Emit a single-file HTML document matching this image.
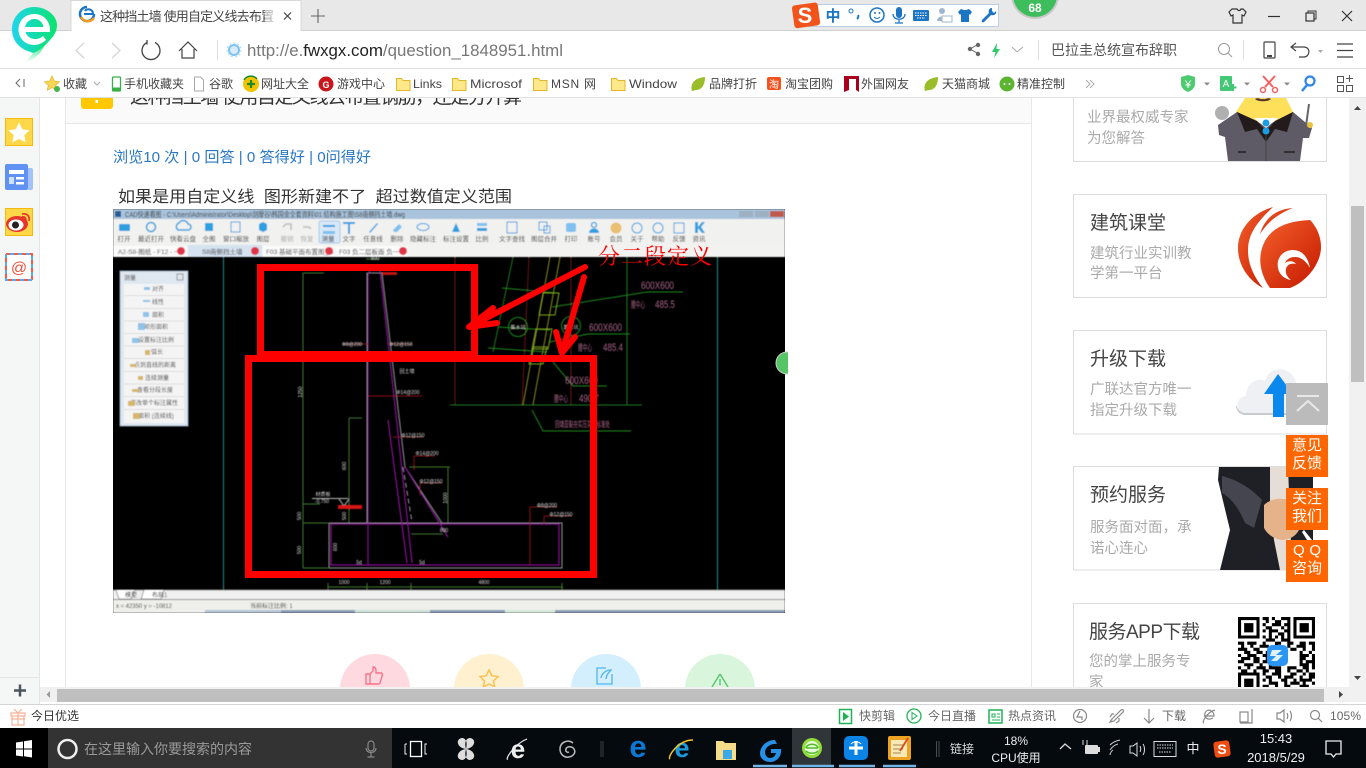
<!DOCTYPE html>
<html lang="zh"><head><meta charset="utf-8"><title>这种挡土墙 使用自定义线去布置</title>
<style>
html,body{margin:0;padding:0;width:1366px;height:768px;overflow:hidden;background:#fff}
svg{display:block;position:absolute;left:0;top:0}
text{font-family:"Liberation Sans","Noto Sans CJK SC",sans-serif;white-space:pre}
.b text{font-size:12px;fill:#444}
.g{font-size:14.5px;fill:#aaa}
.h{font-size:19px;fill:#444}
.o{font-size:15px;fill:#fff;text-anchor:middle}
.l{font-size:6.5px;fill:#333;text-anchor:middle}
.p{font-size:6px;fill:#444;text-anchor:middle}
.w{font-size:5px;fill:#ddd;text-anchor:middle}
.k{font-size:11px;fill:#a9648a}
.s text{font-size:12px;fill:#666}
.t{fill:#eee;font-size:13px;text-anchor:middle}
.ic{fill:none;stroke:#555;stroke-width:1.2}
</style></head><body>
<svg width="1366" height="768" viewBox="0 0 1366 768" xmlns="http://www.w3.org/2000/svg">
<defs>
<linearGradient id="lg" x1="0" x2="1" y1="0" y2="0"><stop offset="0" stop-color="#20d5ea"/><stop offset="1" stop-color="#0be36f"/></linearGradient>
<linearGradient id="tl" x1="0" x2="0" y1="0" y2="1"><stop offset="0" stop-color="#0be36f"/><stop offset="1" stop-color="#0be36f" stop-opacity="0"/></linearGradient>
<linearGradient id="fl" x1="0" x2="1" y1="0" y2="1"><stop offset="0" stop-color="#f4602a"/><stop offset="1" stop-color="#c41800"/></linearGradient>
<filter id="bl" x="0" y="0" width="1" height="1"><feGaussianBlur stdDeviation=".45"/></filter>
<clipPath id="cad"><rect x="113" y="209" width="672" height="404"/></clipPath>
<clipPath id="qr"><rect x="1230" y="610" width="90" height="77"/></clipPath>
</defs>

<!-- page -->
<rect width="1366" height="768" fill="#fff"/>
<rect x="0" y="98" width="39" height="590" fill="#f5f7f6"/>
<rect x="39" y="98" width="1" height="590" fill="#e6e6e6"/>
<rect x="65" y="98" width="1" height="590" fill="#e8e8e8"/>
<rect x="66" y="98" width="965" height="25" fill="#fafafa"/>
<rect x="66" y="123" width="965" height="1" fill="#e6e6e6"/>
<rect x="1031" y="98" width="1" height="590" fill="#e8e8e8"/>
<rect x="81" y="90" width="32" height="19" rx="3" fill="#ffc800"/>
<rect x="95.500" y="100" width="2.500" height="3" fill="#fff"/>
<text x="130" y="103" font-size="19" fill="#333" textLength="392">这种挡土墙 使用自定义线去布置钢筋，还是分开算</text>
<text x="113" y="162" font-size="15" fill="#2a78c4" textLength="258" lengthAdjust="spacingAndGlyphs">浏览10 次 | 0 回答 | 0 答得好 | 0问得好</text>
<text x="118" y="202" font-size="16" fill="#333" textLength="394" lengthAdjust="spacingAndGlyphs">如果是用自定义线  图形新建不了  超过数值定义范围</text>

<!-- left sidebar icons -->
<rect x="5.500" y="118.500" width="27" height="27" fill="#ffd84a" stroke="#f6b910"/>
<path d="M19 122.500l3.300 6.700 7.200 1-5.200 5 1.300 7.200-6.600-3.500-6.600 3.500 1.300-7.200-5.200-5 7.200-1z" fill="#fff"/>
<rect x="5" y="164" width="23" height="26" rx="2" fill="#5f92f3"/><path d="M28 168h3a2 2 0 0 1 2 2v18a2 2 0 0 1-2 2h-3z" fill="#a4c2f8"/>
<rect x="9" y="170" width="15" height="4" fill="#fff"/><rect x="9" y="177" width="5" height="7" fill="#cfe0fc"/><rect x="16" y="177" width="8" height="2.500" fill="#fff"/><rect x="16" y="182" width="8" height="2.500" fill="#fff"/>
<rect x="5.500" y="208.500" width="27" height="27" fill="#ffd84a" stroke="#f6b910"/>
<ellipse cx="17" cy="224" rx="11" ry="8" fill="#e8352c"/><ellipse cx="16" cy="225" rx="7.500" ry="5.500" fill="#fff"/><circle cx="15.500" cy="225" r="3.500" fill="#222"/>
<path d="M22 214c5-1 8 2 7 7M22 217c3-.5 4 1 4 3.500" fill="none" stroke="#e8352c" stroke-width="1.700"/>
<rect x="6" y="254" width="26" height="26" fill="#fff" stroke="#f45b45" stroke-width="2" stroke-dasharray="4 4"/>
<rect x="6" y="254" width="26" height="26" fill="none" stroke="#5aa9ee" stroke-width="2" stroke-dasharray="4 4" stroke-dashoffset="4"/>
<text x="19" y="273" font-size="16" fill="#f0503c" text-anchor="middle">@</text>
<rect x="0" y="677" width="39" height="1" fill="#e4e4e4"/>

<!-- CAD image -->
<g clip-path="url(#cad)">
<rect x="113" y="209" width="672" height="404" fill="#000"/>
<g filter="url(#bl)">
<rect x="113" y="209" width="672" height="10" fill="#a9c3dc"/>
<rect x="115" y="211" width="6" height="6" fill="#2b5d94"/>
<text x="125" y="217" font-size="7.500" fill="#333" textLength="280" lengthAdjust="spacingAndGlyphs">CAD快速看图 - C:\Users\Administrator\Desktop\剑摩谷\韩国金全套资料\01 结构施工图\S8南侧挡土墙.dwg</text>
<rect x="739" y="211" width="14" height="6" fill="#9fb0c2"/><rect x="755" y="211" width="14" height="6" fill="#9fb0c2"/><rect x="770" y="211" width="14" height="6" fill="#c0584c"/>
<rect x="113" y="219" width="672" height="26" fill="#f1f1ef"/>
<rect x="319" y="221" width="21" height="22" rx="2" fill="#d8e8f8" stroke="#a8c8ea"/>
<g fill="#2f9fe0">
<rect x="119" y="224" width="11" height="7" rx="1"/><circle cx="151" cy="227" r="4.500" fill="none" stroke="#2f9fe0" stroke-width="1.500"/>
<path d="M178 230a4 4 0 0 1 1-7 5 5 0 0 1 9 1 3 3 0 0 1 0 6z" fill="none" stroke="#2f9fe0" stroke-width="1.500"/>
<rect x="205" y="223" width="8" height="8"/><rect x="231" y="222" width="9" height="10" fill="none" stroke="#2f9fe0"/><path d="M259 224l4-2 4 2v6l-4 2-4-2z"/>
<path d="M283 227l3-3h5v6M303 227h6l2 2" fill="none" stroke="#bbb" stroke-width="1.500"/>
<rect x="323" y="225" width="12" height="2"/><rect x="323" y="231" width="12" height="3" fill="#7ec0ee"/>
<path d="M343 222h12v2h-5v10h-2v-10h-5z"/><path d="M369 232l8-9 1 1-8 9z"/><path d="M393 230l6-6 3 3-5 5h-3z" fill="#7ec0ee"/><ellipse cx="423" cy="227" rx="6" ry="3.500" fill="none" stroke="#2f9fe0"/>
<path d="M452 232l4-9 4 9z"/><rect x="477" y="223" width="10" height="3" fill="#7ec0ee"/><rect x="477" y="228" width="10" height="3"/>
<rect x="507" y="222" width="10" height="11" fill="none" stroke="#2f9fe0"/><rect x="539" y="222" width="8" height="8" fill="none" stroke="#2f9fe0"/><rect x="544" y="226" width="6" height="7" fill="none" stroke="#2f9fe0"/>
<rect x="566" y="223" width="10" height="9" rx="2" fill="#7ec0ee"/><circle cx="594" cy="225" r="2.500" fill="none" stroke="#2f9fe0" stroke-width="1.300"/><path d="M589 233c0-6 10-6 10 0z"/>
<circle cx="616" cy="228" r="5.500" fill="#e8c070"/><circle cx="637" cy="228" r="5" fill="none" stroke="#2f9fe0"/><circle cx="658" cy="228" r="5" fill="none" stroke="#2f9fe0"/>
<rect x="674" y="223" width="10" height="10" fill="none" stroke="#2f9fe0"/><path d="M695 222h3v5l4-5h3l-4 5 4 6h-3l-4-5v5h-3z"/>
</g>
<g class="l">
<text x="124" y="241">打开</text><text x="151" y="241">最近打开</text><text x="183" y="241">快看云盘</text><text x="209" y="241">全图</text><text x="236" y="241">窗口缩放</text><text x="263" y="241">图层</text><text x="287" y="241" style="fill:#aaa">撤销</text><text x="307" y="241" style="fill:#aaa">恢复</text><text x="328" y="241">测量</text><text x="349" y="241">文字</text><text x="373" y="241">任意线</text><text x="397" y="241">删除</text><text x="423" y="241">隐藏标注</text><text x="456" y="241">标注设置</text><text x="482" y="241">比例</text><text x="512" y="241">文字查找</text><text x="544" y="241">图层合并</text><text x="571" y="241">打印</text><text x="594" y="241">账号</text><text x="616" y="241">会员</text><text x="637" y="241">关于</text><text x="658" y="241">帮助</text><text x="679" y="241">反馈</text><text x="699" y="241">资讯</text>
</g>
<rect x="113" y="245" width="672" height="12" fill="#f2f2f0"/>
<rect x="113" y="246" width="74" height="11" fill="#fbfbfb"/><rect x="188" y="245" width="74" height="12" fill="#d5e2f0"/><rect x="263" y="246" width="72" height="11" fill="#fbfbfb"/><rect x="336" y="246" width="72" height="11" fill="#fbfbfb"/>
<g fill="#333">
<text x="118" y="254" font-size="6.500">A2-S8-图纸 - F12 - 一</text><text x="202" y="254" font-size="6.500">S8南侧挡土墙</text><text x="266" y="254" font-size="6.500">F03 基础平面布置图_t3</text><text x="339" y="254" font-size="6.500">F03 负二层板面 负一</text>
</g>
<circle cx="181" cy="251" r="4" fill="#e03548"/><circle cx="255" cy="251" r="4" fill="#e03548"/><circle cx="329" cy="251" r="4" fill="#e03548"/><circle cx="403" cy="251" r="4" fill="#e03548"/>

<rect x="223" y="257" width="1" height="333" fill="#1f8f8f"/><rect x="717" y="257" width="1" height="333" fill="#1f8f8f"/>

<!-- measure panel -->
<rect x="120" y="271" width="68" height="155" fill="#dfe7f0" stroke="#8ea2b8"/>
<rect x="124" y="284" width="60" height="139" fill="#f4f4f4"/>
<text x="124" y="280" font-size="6" fill="#555">测量</text><rect x="177" y="274" width="6" height="6" fill="none" stroke="#777" stroke-width=".7"/>
<path d="M124 295.500h60M124 308.500h60M124 321h60M124 333.500h60M124 346h60M124 358.500h60M124 371.500h60M124 384h60M124 396.500h60M124 409.500h60" stroke="#ddd"/>
<g class="p">
<text x="158" y="291">对齐</text><text x="158" y="304">线性</text><text x="158" y="317">面积</text><text x="156" y="329">矩形面积</text><text x="156" y="342">设置标注比例</text><text x="157" y="354">弧长</text><text x="155" y="367">点到直线的距离</text><text x="157" y="380">连续测量</text><text x="155" y="392">查看分段长度</text><text x="154" y="405">修改单个标注属性</text><text x="156" y="418">面积 (连续线)</text>
</g>
<g fill="#8fc3e8"><rect x="144" y="287" width="6" height="3"/><rect x="143" y="300" width="7" height="2"/><rect x="143" y="312" width="6" height="5"/><rect x="138" y="323" width="7" height="7"/><rect x="132" y="338" width="7" height="5"/></g>
<g fill="#d8b668"><rect x="145" y="350" width="5" height="5"/><rect x="130" y="364" width="6" height="3"/><rect x="138" y="376" width="5" height="4"/><rect x="132" y="389" width="7" height="3"/><rect x="128" y="401" width="7" height="5"/><rect x="133" y="413" width="7" height="6"/></g>

<!-- right side drawing -->
<g fill="none" stroke-width="1">
<path d="M455 257v148M529 257l-7 148M571 257v148M627 257v148" stroke="#6a1218"/>
<path d="M513 257l-20 95M627 257v148M450 405h192" stroke="#1f7a1f"/>
<path d="M550 257l-27 148M560 257l-27 148" stroke="#8a8a1c"/>
<path d="M502 288l55 5M498 327l52 3M488 348l59 4M552 307l95-15h36M550 342l38-8h42M553 362l20 24h34M532 410l11 21h88" stroke="#1f8a1f"/>
<path d="M543 293l16 0 -4 22-16 0zM536 329l16 0-4 20-16 0zM533 347l14 0-4 17-14 0z" stroke="#7fa81f"/>
<circle cx="518" cy="327" r="9.500" stroke="#1f8a1f"/><circle cx="571" cy="326" r="9.500" stroke="#1f8a1f"/>
</g>
<text x="518" y="329" class="w">集水坑</text><text x="571" y="329" class="w">集水坑</text>
<g class="k">
<text x="641" y="289" textLength="33" lengthAdjust="spacingAndGlyphs">600X600</text>
<text x="631" y="308" font-size="9" style="font-size:9px" textLength="14" lengthAdjust="spacingAndGlyphs">腰中心</text><text x="655" y="308" textLength="20" lengthAdjust="spacingAndGlyphs">485.5</text>
<text x="589" y="331" textLength="33" lengthAdjust="spacingAndGlyphs">600X600</text>
<text x="578" y="351" style="font-size:9px" textLength="14" lengthAdjust="spacingAndGlyphs">腰中心</text><text x="603" y="351" textLength="20" lengthAdjust="spacingAndGlyphs">485.4</text>
<text x="565" y="384" textLength="33" lengthAdjust="spacingAndGlyphs">600X600</text>
<text x="554" y="402" style="font-size:9px" textLength="14" lengthAdjust="spacingAndGlyphs">腰中心</text><text x="579" y="402" textLength="20" lengthAdjust="spacingAndGlyphs">490.7</text>
</g>
<text x="555" y="427" font-size="8" fill="#b56c90" textLength="55" lengthAdjust="spacingAndGlyphs">回填亚黏夯实压实度标准处</text>

<!-- wall drawing -->
<g fill="none">
<path d="M303 273v295M303 273h21M349 418v105M349 418h13M303 504h17M303 523h25M303 568h25M328 587h235M328 583v8M367 583v8M411 583v8M562 583v8M409 467h41M448 467v56M411 534h32M366 259h14" stroke="#3f7a2f"/>
<path d="M367 273v250M367 273h15L405 467l37 56M329 523h233v45H329z" stroke="#999"/>
<path d="M403 467l9 55" stroke="#999" stroke-dasharray="5 3"/>
<path d="M368 275v290M368 275l2-5h10l16 145 16 148M388 420l19 143M405 467l43 70M331 524h228v41H331z" stroke="#8a0f98" stroke-width="1.200"/>
<path d="M343 344h25M387 344h25M368 396h54M393 437h30M414 456h21M414 456v14M420 483h22M420 483v12M530 507h27M530 507v58M544 516h28M544 516v8" stroke="#8e1012"/>
<path d="M312 498.500h36M339 499l5 7 5-7" stroke="#bbb"/>
</g>
<rect x="338" y="505" width="24" height="4" fill="#d81818"/>
<rect x="382" y="272" width="15" height="3" fill="#c01818"/>
<g class="w">
<text x="352" y="346">Φ8@200</text><text x="401" y="346">Φ12@150</text><text x="408" y="394">Φ14@200</text><text x="413" y="437">Φ12@150</text><text x="427" y="455">Φ14@200</text><text x="431" y="483">Φ12@150</text><text x="407" y="373">回土墙</text><text x="323" y="496">材质板</text><text x="322" y="503">-0.750</text><text x="344" y="584">1000</text><text x="385" y="584">1200</text><text x="484" y="584">4800</text><text x="444" y="532">800</text><text x="547" y="507">Φ8@200</text><text x="561" y="516">Φ12@150</text><text x="359" y="564">5d</text><text x="422" y="564">5d</text><text x="375" y="260">800</text>
</g>
<g class="w">
<text transform="translate(302,392) rotate(-90)">1250</text><text transform="translate(346,466) rotate(-90)">600</text><text transform="translate(301,516) rotate(-90)">500</text><text transform="translate(346,516) rotate(-90)">500</text><text transform="translate(301,550) rotate(-90)">500</text><text transform="translate(337,547) rotate(-90)">600</text><text transform="translate(447,498) rotate(-90)">1000</text>
</g>
<!-- bottom -->
<rect x="113" y="590" width="672" height="10" fill="#f0f0f0"/><path d="M113 590h672M113 599.500h672" stroke="#888"/>
<path d="M116 590l3 9h12l4-9M144 590l-3 9h20l3-9" fill="#fff" stroke="#555" stroke-width=".6"/>
<text x="125" y="597" font-size="6" fill="#222">模型</text><text x="152" y="597" font-size="6" fill="#222">布局1</text>
<rect x="113" y="600" width="672" height="10" fill="#efefeb"/>
<text x="116" y="608" font-size="6" fill="#333" textLength="56">x = 42350 y = -10812</text><text x="250" y="608" font-size="6" fill="#333">当前标注比例: 1</text>
<rect x="113" y="610" width="672" height="3" fill="#8a9db8"/>
<rect x="113" y="610" width="94" height="3" fill="#eee"/><rect x="205" y="610" width="76" height="3" fill="#b6c4d6"/><rect x="355" y="610" width="75" height="3" fill="#cfe0d8"/><rect x="505" y="610" width="50" height="3" fill="#d4e8d8"/>
</g>
<!-- red annotation -->
<rect x="260.500" y="267.500" width="214" height="87" fill="none" stroke="#f00" stroke-width="7"/>
<rect x="248.500" y="358.500" width="345" height="216" fill="none" stroke="#f00" stroke-width="7"/>
<path d="M585 267L469 327M497 323L469 327L493 308M584 277L562 353M556 332L562 353L575 337" fill="none" stroke="#f00" stroke-width="6" stroke-linecap="round" stroke-linejoin="round"/>
<text x="598" y="264" font-size="22" fill="#f00" textLength="114" style="font-family:'Liberation Serif','Noto Serif CJK SC',serif">分二段定义</text>
</g>
<circle cx="787" cy="363" r="11" fill="#55c565" stroke="#ccc"/>
<rect x="785" y="345" width="3" height="1" fill="#fff"/>
<rect x="788" y="350" width="12" height="26" fill="#fff"/>

<!-- action circles -->
<circle cx="375" cy="689" r="35" fill="#ffd9e0"/><circle cx="489" cy="689" r="35" fill="#fff0cf"/><circle cx="606" cy="689" r="35" fill="#d3effe"/><circle cx="720" cy="689" r="35" fill="#d9f6dc"/>
<path d="M366 674h4v10h-4zM370 674l3-3v-4c3 0 3 2 3 6h5c1 0 2 1 1 3l-2 7c0 1-1 1-2 1h-8" fill="none" stroke="#f8738c" stroke-width="1.400"/>
<path d="M489 670l2.900 5.700 6.100.9-4.400 4.300 1 6-5.600-2.900-5.600 2.900 1-6-4.400-4.300 6.100-.9z" fill="none" stroke="#fbbf4c" stroke-width="1.400"/>
<path d="M612 674v10h-15v-16h9M601 678c1-5 5-8 10-8-3 3-5 6-5 9" fill="none" stroke="#4eb5ef" stroke-width="1.300"/>
<path d="M720 674l-8 13M720 674l8 13M720 679v6" fill="none" stroke="#55c76a" stroke-width="1.400"/>

<!-- right cards -->
<g fill="#fff" stroke="#ddd">
<rect x="1073.500" y="90" width="253" height="71.500"/><rect x="1073.500" y="194.500" width="253" height="103"/><rect x="1073.500" y="330.500" width="253" height="103.500"/><rect x="1073.500" y="466.500" width="253" height="103.500"/><rect x="1073.500" y="603.500" width="253" height="110"/>
</g>
<text class="g" x="1087" y="122">业界最权威专家</text><text class="g" x="1087" y="143">为您解答</text>
<circle cx="1222" cy="113" r="7" fill="#b0b0b0"/>
<path d="M1245 98h41l7 14-27 14-30-14z" fill="#ffe05a"/>
<path d="M1255 99c4-2 5 1 8 0 3 1 4-2 8 0-3 3-13 3-16 0z" fill="#5a3328"/>
<path d="M1218 125l19-13 29 14 27-14 19 16-3 10-6 0-3 23h-72l-3-24-6-2z" fill="#5f5b66"/>
<path d="M1237 112l20 9 9 10 9-10 18-9-6 20-12-3-9 13-9-13-12 3z" fill="#231b1b"/>
<path d="M1254 118h24l-12 10z" fill="#fff"/><circle cx="1266" cy="123" r="3.500" fill="#1c9de3"/><circle cx="1266" cy="131" r="3.500" fill="#1c9de3"/>
<path d="M1238 152h8M1284 152h11" stroke="#222" stroke-width="1.500"/><path d="M1266 135v26" stroke="#444"/>
<path d="M1309 104l-3 22" stroke="#666" stroke-width="2"/><circle cx="1310" cy="125" r="3" fill="#e8c43c"/>
<text class="h" x="1090" y="229">建筑课堂</text><text class="g" x="1090" y="258">建筑行业实训教</text><text class="g" x="1090" y="278">学第一平台</text>
<path d="M1273 207c-23 7-35 24-35 41 0 17 10 32 25 40-9-11-15-24-15-37 0-15 6-26 25-44z" fill="url(#fl)"/>
<path d="M1293 208c-16 1-28 9-33 26 7-11 17-20 33-26z" fill="url(#fl)"/>
<path d="M1310 220c-23 1-38 8-45 21-7 13-7 30 5 47h20c16-6 31-24 31-41 0-11-5-21-11-27z" fill="url(#fl)"/>
<path d="M1278 268c-2-10 5-18 15-18 9 0 15 7 17 18-4-7-9-11-15-11-5 0-8 2-10 6 4-3 9-2 11 1-4-1-9 0-10 5-1 4 1 8 5 11-7-1-12-6-13-12z" fill="#fff"/>
<text class="h" x="1090" y="365">升级下载</text><text class="g" x="1090" y="394">广联达官方唯一</text><text class="g" x="1090" y="415">指定升级下载</text>
<path d="M1246 413c-12 0-11-16 0-17 0-12 10-19 19-15 3-12 16-14 22-10 10 5 11 17 9 23 5 2 8 6 8 19z" fill="#eef0f4"/>
<path d="M1236 405c0 7 5 10 10 10h48v-2h-48c-5 0-8-3-10-8z" fill="#c8cbd1"/>
<path d="M1278 374l-14 20h9v23h11v-23h9z" fill="#0a88ee"/>
<text class="h" x="1090" y="501">预约服务</text><text class="g" x="1090" y="532">服务面对面，承</text><text class="g" x="1090" y="553">诺心连心</text>
<path d="M1219 467h94v103h-93l10-40-12-50z" fill="#1f2026"/>
<path d="M1270 467h18l4 103h-12l-6-30-4-40z" fill="#e6ded6"/>
<path d="M1222 476c16 4 30 13 40 24l-8 28-9-5c-6-15-14-25-23-30z" fill="#44454e"/>
<path d="M1264 505c8-8 22-8 30-2 8 5 10 14 6 24-2 8-10 13-18 13-8-1-14-5-18-12z" fill="#e6b28a"/>
<path d="M1304 530l8 10h-5l-5-8zM1313 467h14v103h-14z" fill="#fff"/>
<text class="h" x="1089" y="638" textLength="111">服务APP下载</text><text class="g" x="1089" y="666">您的掌上服务专</text><text class="g" x="1089" y="687">家</text>
<!-- QR -->
<g clip-path="url(#qr)"><g transform="translate(1238,617) scale(3.080)">
<path fill="#000" fill-rule="evenodd" d="M0 0h7v7H0zM1 1v5h5V1zM2 2h3v3H2zM18 0h7v7h-7zM19 1v5h5V1zM20 2h3v3h-3zM0 18h7v7H0zM1 19v5h5v-5zM2 20h3v3H2z"/>
<path stroke="#000" fill="none" d="M8 .5h2m1 0h1m2 0h3M9 1.500h1m2 0h2m2 0h1M8 2.500h1m2 0h3m1 0h2M9 3.500h2m3 0h1m1 0h1M8 4.500h1m1 0h3m2 0h2M10 5.500h1m2 0h2m1 0h1M8 6.500h1m1 0h1m1 0h1m1 0h1m1 0h1M9 7.500h3m2 0h3M0 8.500h2m1 0h3m2 0h1m3 0h2m2 0h2m2 0h2m1 0h2M1 9.500h1m2 0h1m2 0h3m2 0h1m3 0h1m2 0h3m2 0h1M0 10.500h3m2 0h2m3 0h3m4 0h2m2 0h1m2 0h1M2 11.500h2m2 0h2m1 0h2m9 0h1m2 0h1M0 12.500h1m2 0h3m2 0h2m10 0h3m1 0h1M1 13.500h3m1 0h2m2 0h1m10 0h2m2 0h1M0 14.500h2m3 0h2m1 0h3m9 0h1m1 0h3M2 15.500h3m2 0h1m2 0h1m9 0h3m1 0h1M0 16.500h1m2 0h1m2 0h3m1 0h4m2 0h3m2 0h2m1 0h1M1 17.500h2m2 0h1m2 0h2m2 0h2m2 0h1m2 0h2m1 0h1M8 18.500h1m2 0h3m3 0h2m2 0h1m1 0h2M9 19.500h2m2 0h1m1 0h3m2 0h1m2 0h2M8 20.500h1m1 0h1m3 0h2m2 0h1m1 0h4M10 21.500h3m2 0h1m1 0h3m1 0h1m2 0h1M8 22.500h2m2 0h1m2 0h2m3 0h3M9 23.500h1m2 0h3m2 0h1m2 0h1m1 0h2M8 24.500h3m2 0h1m2 0h3m2 0h3"/>
</g>
<rect x="1267" y="645" width="21" height="21" rx="5" fill="#2a95f4"/><path d="M1272 650h10l-6 5h7l-6 6h-6l5-5h-6z" fill="#dff0ff"/></g>

<!-- scrollbars -->
<rect x="1349" y="98" width="17" height="590" fill="#f1f1f1"/>
<rect x="1351" y="206" width="13" height="176" fill="#bfbfbf"/>
<path d="M1354 110l3.500-4 3.500 4z" fill="#444"/><path d="M1354 676l3.500 4 3.500-4z" fill="#444"/>
<rect x="0" y="687" width="1366" height="17" fill="#fff"/>
<rect x="0" y="687" width="39" height="17" fill="#f5f7f6"/><rect x="39" y="687" width="1" height="17" fill="#e6e6e6"/>
<rect x="40" y="687" width="1326" height="15" fill="#f0f0f0"/>
<rect x="57" y="689" width="1267" height="13" fill="#bfbfbf"/>
<path d="M50 691l-3.500 3.500 3.500 3.500z" fill="#999"/><path d="M1339 691l4 3.500-4 3.500z" fill="#444"/>
<rect x="1349" y="687" width="17" height="15" fill="#f1f1f1"/>
<rect x="0" y="704" width="1366" height="1" fill="#d4d4d4"/>
<path d="M14 690.500h12M20 684.500v12" stroke="#4d555c" stroke-width="2.500"/>

<!-- float buttons -->
<rect x="1286" y="383" width="42" height="42" fill="#bbb"/><path d="M1297 396h22M1297 411l11-10 11 10" fill="none" stroke="#e8e8e8" stroke-width="2"/>
<rect x="1286" y="435" width="42" height="42" fill="#f60"/><rect x="1286" y="488" width="42" height="42" fill="#f60"/><rect x="1286" y="540" width="42" height="42" fill="#f60"/>
<g class="o"><text x="1307" y="450">意见</text><text x="1307" y="468">反馈</text><text x="1307" y="503">关注</text><text x="1307" y="521">我们</text><text x="1307" y="555" textLength="28">Q Q</text><text x="1307" y="573">咨询</text></g>

<!-- status bar -->
<rect x="0" y="705" width="1366" height="23" fill="#fff"/>
<path d="M11 713h14v3H11zM12 716h12v9H12zM18 713v12M11 719h14M14 709l4 4 4-4" fill="none" stroke="#f5b49a" stroke-width="1.200"/>
<g class="s">
<text x="31" y="720" style="fill:#333">今日优选</text>
<text x="859" y="720">快剪辑</text><text x="928" y="720">今日直播</text><text x="1008" y="720">热点资讯</text><text x="1162" y="720">下载</text><text x="1330" y="720" textLength="31">105%</text>
</g>
<rect x="839.500" y="709.500" width="12" height="14" fill="none" stroke="#1fb255" stroke-width="1.500"/><path d="M843 712l6 4.500-6 4.500z" fill="#1fb255"/>
<circle cx="914" cy="716" r="7" fill="none" stroke="#1fb255" stroke-width="1.300"/><path d="M912 712.500l5 3.500-5 3.500z" fill="none" stroke="#1fb255"/>
<rect x="989" y="710" width="13" height="13" fill="none" stroke="#1fb255" stroke-width="1.500"/><path d="M992 714h3v3h-3zM997 714h3M997 717h3M992 720h8" fill="none" stroke="#1fb255"/>
<g class="ic" style="stroke:#888">
<circle cx="1080" cy="716" r="6.500"/><path d="M1080 711l-3 6h5v3"/>
<path d="M1110 722l4-1 9-9c1-2 0-3-2-2l-9 9zM1114 714l-2 0-2 3M1119 718v3l-3 2"/>
<path d="M1149 709v14M1144 718l5 5 5-5"/>
<path d="M1204 716h10c0-6-7-8-9-3-1 4 2 8 8 5M1204 723c-3 0 3-11 11-13"/>
<rect x="1240" y="712" width="8" height="10"/><path d="M1240 723h12v-14"/>
<path d="M1277 713h3l4-3v12l-4-3h-3zM1287 713c1 2 1 4 0 6M1290 711c2 3 2 7 0 10"/>
<circle cx="1315" cy="715" r="4.500"/><path d="M1318 718l4 4"/>
</g>

<!-- taskbar -->
<rect x="0" y="728" width="1366" height="40" fill="#040a0e"/>
<rect x="0" y="728" width="48" height="40" fill="#000"/>
<rect x="48" y="728" width="344" height="40" fill="#333"/>
<path d="M16 742.500l7-1v7h-7zM24 741.300l8-1.300v8.500h-8zM16 749.500h7v7l-7-1zM24 749.500h8v8l-8-1.200z" fill="#fff"/>
<circle cx="67.500" cy="749" r="9" fill="none" stroke="#eee" stroke-width="2.500"/>
<text x="84" y="754" font-size="14" fill="#9a9a9a">在这里输入你要搜索的内容</text>
<rect x="368" y="741" width="6" height="10" rx="3" fill="none" stroke="#888" stroke-width="1.200"/><path d="M366 748c0 6 10 6 10 0M371 753v4M367.500 757h7" fill="none" stroke="#888" stroke-width="1.200"/>
<path d="M405 744h2M405 744v10h2M427 744h-2v10h2" fill="none" stroke="#eee"/><rect x="410.500" y="741.500" width="11" height="15" fill="none" stroke="#fff" stroke-width="1.300"/>
<path d="M466 749c-9-1-11-10-4-11 3 0 6 3 4 11zM466 749c9-1 11-10 4-11-3 0-6 3-4 11zM466 749c-9 1-11 10-4 11 3 0 6-3 4-11zM466 749c9 1 11 10 4 11-3 0-6-3-4-11z" fill="#ddd"/>
<text x="518" y="758" font-size="26" font-weight="bold" fill="#eee" text-anchor="middle">e</text><path d="M508 759c-4 2 6-15 19-20" fill="none" stroke="#eee" stroke-width="1.200"/>
<path d="M573 743c-5-4-13-1-13 6 0 6 5 9 9 8 5-1 7-5 5-8-2-3-7-3-8 0-1 2 1 4 3 3" fill="none" stroke="#bbb" stroke-width="1.500"/>
<path d="M601 741v16M603 741v16" stroke="#3a3e42"/>
<text x="638" y="757" font-size="31" font-weight="bold" fill="#0b78d6" text-anchor="middle">e</text>
<text x="682" y="757" font-size="27" font-weight="bold" fill="#1a9be0" text-anchor="middle">e</text><path d="M670 759c-3-2 8-19 23-19" fill="none" stroke="#f5c51e" stroke-width="1.500"/>
<path d="M716 741h7l2 2h11v17h-20z" fill="#f5dc8a"/><rect x="723" y="750" width="9" height="9" fill="#3ba9e8"/>
<path d="M775 740c-10 0-15 8-15 13 0 6 5 9 10 9 6 0 12-5 11-13h-10v4h5c-1 4-4 5-6 5-3 0-5-3-5-6 0-4 5-9 12-8z" fill="#2690e6"/>
<rect x="792" y="728" width="39" height="38" fill="#30353a"/>
<circle cx="812" cy="748" r="10" fill="#8fdc3a"/><circle cx="812" cy="748" r="7" fill="#eaf9dc"/><path d="M806 748h12M806 748c1-5 11-5 12 0M806 751c3 3 9 3 12 0" fill="none" stroke="#4fbd2a" stroke-width="1.500"/>
<rect x="844" y="736" width="24" height="24" rx="5" fill="#0a84e6"/><path d="M856 741v14M849 748h14" stroke="#fff" stroke-width="3"/><path d="M851 744c3-3 7-3 10 0" fill="none" stroke="#fff"/>
<rect x="888" y="736" width="23" height="24" rx="2" fill="#eea221"/><rect x="891" y="740" width="16" height="17" fill="#f8e8b8"/><path d="M893 745h10M893 749h10M893 753h8" stroke="#a88a4a"/><path d="M900 751l8-13" stroke="#d84a20" stroke-width="1.800"/>
<path d="M753 766h34M792 766h42M839 766h36M883 766h33" stroke="#72b3e8" stroke-width="2.500"/>
<path d="M936.500 741v16M939 741v16" stroke="#4a4e52"/>
<text x="950" y="753" font-size="12" fill="#ddd" textLength="24">链接</text>
<text x="1016" y="745" class="t" style="font-size:12px">18%</text><text x="1016" y="762" class="t" style="font-size:12px">CPU使用</text>
<path d="M1060 749l5-5 6 5" fill="none" stroke="#ddd" stroke-width="1.300"/>
<rect x="1085" y="745" width="13" height="9" rx="1" fill="#ddd"/><path d="M1083 740v5M1087 740v5" stroke="#ddd"/><rect x="1098" y="747" width="2" height="5" fill="#ddd"/>
<path d="M1110 755c.5-3 1.500-4 3-5M1110 750c2-3 4-5 8-6M1110 745c2-2 5-4 10-5" fill="none" stroke="#ccc"/>
<path d="M1130 746h3l4-3v13l-4-3h-3zM1140 746c1 2 1 4 0 6M1143 744c2 3 2 8 0 11" fill="none" stroke="#ddd"/>
<rect x="1154" y="741.500" width="22" height="15" fill="none" stroke="#ddd"/><path d="M1157 745h16M1157 748h16M1159 752h12" stroke="#ddd" stroke-dasharray="1.500 1"/>
<text x="1193" y="753" class="t">中</text>
<rect x="1214" y="741" width="16" height="16" rx="3" fill="#ef4d12" transform="rotate(-8 1222 749)"/><text x="1222" y="754" font-size="14" font-weight="bold" fill="#fff" text-anchor="middle">S</text>
<text x="1276" y="743" class="t" style="font-size:13px">15:43</text><text x="1276" y="762" class="t" style="font-size:13px">2018/5/29</text>
<path d="M1326 741h15v13h-5l-2.500 3-2.500-3h-5z" fill="none" stroke="#eee" stroke-width="1.300"/>

<!-- browser chrome -->
<rect x="0" y="0" width="1366" height="31" fill="#e8e8e8"/>
<rect x="0" y="30" width="1366" height="1" fill="#d0d0d0"/>
<rect x="71" y="0" width="230" height="31" fill="#fff"/><path d="M71 31V.5h230V31" fill="none" stroke="#d8d8d8"/>
<rect x="0" y="31" width="1366" height="37" fill="#fff"/>
<rect x="0" y="68" width="1366" height="1" fill="#e0e0e0"/>
<rect x="0" y="69" width="1366" height="28" fill="#fff"/>
<rect x="0" y="97" width="1366" height="1" fill="#e0e0e0"/>

<!-- tab -->
<path d="M87 7a7 7 0 1 0 7 7" fill="none" stroke="#1b76c9" stroke-width="2.500"/><path d="M81 17c3 5 9 6 13 1" fill="none" stroke="#f39a1f" stroke-width="2.500"/><path d="M84 14h9c0-5-6-6-8-3" fill="none" stroke="#1b76c9" stroke-width="2"/>
<text x="100" y="21" font-size="13" fill="#444" textLength="174">这种挡土墙 使用自定义线去布置</text>
<rect x="265" y="8" width="10" height="16" fill="#fff" opacity=".6"/>
<path d="M284 12.500l7 7M291 12.500l-7 7" stroke="#444" stroke-width="1.200"/>
<path d="M318 9v14M311 16h14" stroke="#666" stroke-width="1.100"/>

<!-- logo -->
<path d="M34 7c-12.500 0-22 10-22 22 0 11 6 17 13 21l8 3c7-3 12-7 17-13 5-5 7-10 7-15C57 16 47 7 34 7z" fill="url(#lg)"/>
<path d="M33 53l13-11c-3 8-8 15-18 20l-3 0c3-3 6-6 8-9z" fill="url(#tl)"/>
<path d="M34 14c-9 0-15.500 7-15.500 15.500S25 45 34 45c4 0 9-2 12-5l-3-4c-2 2-5 3-8 3-4.500 0-8.500-3-9.500-7H50c1-9-5-18-16-18zm-9 13c1-5 5-8 9.500-8s8 3 9 8z" fill="#fff"/>

<!-- nav -->
<path d="M84 43l-8 7.500 8 7.500M112 43l8 7.500-8 7.500" fill="none" stroke="#d4d4d4" stroke-width="1.200"/>
<path d="M147 42.500a9 9 0 1 0 8 0M147 40v4.500" fill="none" stroke="#444" stroke-width="1.300"/>
<path d="M179 51l9-9 9 9M182 49v9h12v-9" fill="none" stroke="#444" stroke-width="1.200"/>
<rect x="217" y="40" width="1" height="20" fill="#ddd"/>
<circle cx="234" cy="50" r="5" fill="#d6ecfb" stroke="#7ec2ef" stroke-width="2"/><circle cx="234" cy="50" r="7" fill="none" stroke="#a8d8f5" stroke-dasharray="2 2"/>
<text x="247" y="56" font-size="17" fill="#777" textLength="316" lengthAdjust="spacingAndGlyphs"><tspan>http://e.</tspan><tspan fill="#222">fwxgx.com</tspan><tspan>/question_1848951.html</tspan></text>
<path d="M977 45l-7 4 7 4" fill="none" stroke="#666"/><circle cx="978" cy="45" r="2.200" fill="#666"/><circle cx="970" cy="49" r="2.200" fill="#666"/><circle cx="978" cy="54" r="2.200" fill="#666"/>
<path d="M997 43l-5 9h3.500l-1.500 6 6-9h-3.500z" fill="#2fc86a"/>
<path d="M1012 47l5 5 6-5" fill="none" stroke="#aaa"/>
<rect x="1038" y="40" width="1" height="20" fill="#ddd"/>
<text x="1051" y="55" font-size="14" fill="#555">巴拉圭总统宣布辞职</text>
<circle cx="1224" cy="49" r="5.500" fill="none" stroke="#999"/><path d="M1228 53l4 4" stroke="#999"/>
<rect x="1243" y="40" width="1" height="20" fill="#ddd"/>
<rect x="1264" y="42" width="11" height="16" rx="1" fill="none" stroke="#444" stroke-width="1.200"/><rect x="1267" y="55" width="5" height="2" fill="#444"/>
<path d="M1296 43l-5 4 5 4M1291 47h13c7 0 6 10 0 10h-5" fill="none" stroke="#444" stroke-width="1.200"/>
<path d="M1318 50h5l-2.500 3z" fill="#aaa"/>
<path d="M1337 44h16M1337 50.500h16M1337 57h16" stroke="#444" stroke-width="1.200"/>

<!-- window controls -->
<path d="M1232 9l-3 3 2 4 2-1v8h9v-8l2 1 2-4-3-3h-2c-.5 2-3 2-4 0z" fill="none" stroke="#333" stroke-width="1.200"/>
<path d="M1268 16.500h12" stroke="#333" stroke-width="1.200"/>
<rect x="1306" y="13" width="8" height="8" fill="none" stroke="#333" stroke-width="1.200"/><path d="M1308 13v-2h8v8h-2" fill="none" stroke="#333"/>
<path d="M1342 11l10 10M1352 11l-10 10" stroke="#333" stroke-width="1.200"/>

<!-- green ball -->
<circle cx="1035" cy="-5" r="24" fill="#bbb" opacity=".7"/><circle cx="1035" cy="-5" r="22" fill="#3ebd5c"/>
<text x="1035" y="12" font-size="12" font-weight="bold" fill="#fff" text-anchor="middle">68</text>

<!-- sogou -->
<rect x="808.500" y="4.500" width="190" height="22" fill="#fff" stroke="#b9cfe4"/>
<rect x="793" y="4" width="26" height="23" rx="3" fill="#f1531a" transform="rotate(-8 805 15)"/>
<text x="805" y="23" font-size="22" font-weight="bold" fill="#fff" text-anchor="middle">S</text>
<text x="833" y="21" font-size="15" font-weight="bold" fill="#1b75c4" text-anchor="middle">中</text>
<circle cx="851" cy="11" r="2" fill="none" stroke="#1b75c4"/><path d="M858 15c1 2 0 3-1 4" fill="none" stroke="#1b75c4" stroke-width="2"/>
<circle cx="877" cy="15" r="7" fill="none" stroke="#1b75c4" stroke-width="1.500"/><circle cx="875" cy="13" r="1" fill="#1b75c4"/><circle cx="879.500" cy="13" r="1" fill="#1b75c4"/><path d="M874 17c2 2 4 2 6 0" fill="none" stroke="#1b75c4"/>
<rect x="896" y="7" width="6" height="11" rx="3" fill="#1b75c4"/><path d="M893 14c0 7 12 7 12 0M899 20v3M895 23h8" fill="none" stroke="#1b75c4" stroke-width="1.300"/>
<rect x="913" y="10" width="16" height="11" rx="1" fill="#1b75c4"/><path d="M915 13h12M915 15.500h12M917 18h8" stroke="#fff" stroke-dasharray="1.500 1"/>
<circle cx="942" cy="11" r="3" fill="#9eb6cd"/><path d="M937 21c0-6 10-6 10 0z" fill="#9eb6cd"/><rect x="942" y="16" width="10" height="6" fill="#fff" stroke="#9eb6cd"/>
<path d="M961 9l3 1h2l3-1 3 3-2 3-1-1v8h-8v-8l-1 1-2-3z" fill="#1b75c4"/>
<path d="M992 8c-3 0-4 3-3 5l-7 7c-1 2 1 3 2 2l7-7c3 1 6-1 5-4l-2 2-2-2z" fill="#1b75c4"/>

<!-- bookmarks -->
<path d="M20 79l-4 4 4 4M24 79v8" fill="none" stroke="#666"/>
<path d="M52 76l2.300 5 5.200.7-3.800 3.500 1 5-4.700-2.600-4.700 2.600 1-5-3.800-3.500 5.200-.7z" fill="#f8d65a" stroke="#e3b52a" stroke-width=".7"/><circle cx="57" cy="89" r="3" fill="#46b54a"/>
<path d="M94 82l3 3 3-3" fill="none" stroke="#aaa"/>
<rect x="112.500" y="77" width="8" height="14" rx="1" fill="#fff" stroke="#38b048" stroke-width="1.300"/><rect x="113" y="87.500" width="7" height="3" fill="#38b048"/>
<path d="M194.500 77h6l3 3v11h-9z" fill="#fff" stroke="#aaa"/>
<circle cx="251" cy="84" r="8" fill="#f3c300"/><path d="M247 84h8M251 80v8" stroke="#1a8a2a" stroke-width="2.200"/><path d="M244 80a8 8 0 0 1 13-1" fill="none" stroke="#1a8a2a" stroke-width="1.500"/>
<circle cx="326" cy="84" r="7.500" fill="#c8161d"/><text x="326" y="88" font-size="9" font-weight="bold" fill="#fff" text-anchor="middle">G</text>
<g fill="#ffe88a" stroke="#e3b52a"><path d="M396.500 78.500h5l1.500 2h7v10h-13.500z"/><path d="M452.500 78.500h5l1.500 2h7v10h-13.500z"/><path d="M533.500 78.500h5l1.500 2h7v10h-13.500z"/><path d="M611.500 78.500h5l1.500 2h7v10h-13.500z"/></g>
<path d="M692 91c-2-7 2-13 13-14 0 9-4 13-9 13l-4 1z" fill="#9abe2a"/><path d="M917 91c-2-7 2-13 13-14 0 9-4 13-9 13l-4 1z" transform="translate(8 0)" fill="#9abe2a"/>
<rect x="767" y="77" width="14" height="13" rx="2" fill="#f4511e"/><text x="774" y="88" font-size="10" fill="#fff" text-anchor="middle">淘</text>
<path d="M844 76h15v16l-3-2V79h-7v11l-5 2z" fill="#a8001c"/>
<circle cx="1007" cy="84" r="7.500" fill="#5cb531"/><circle cx="1004.500" cy="84" r="1" fill="#fff"/><circle cx="1009.500" cy="84" r="1" fill="#fff"/>
<g class="b">
<text x="63" y="88">收藏</text><text x="124" y="88">手机收藏夹</text><text x="209" y="88">谷歌</text><text x="261" y="88">网址大全</text><text x="337" y="88">游戏中心</text><text x="413" y="88" textLength="29" lengthAdjust="spacingAndGlyphs">Links</text><text x="470" y="88" textLength="52" lengthAdjust="spacingAndGlyphs">Microsof</text><text x="551" y="88" textLength="45">MSN 网</text><text x="629" y="88" textLength="48" lengthAdjust="spacingAndGlyphs">Window</text><text x="709" y="88">品牌打折</text><text x="785" y="88">淘宝团购</text><text x="861" y="88">外国网友</text><text x="942" y="88">天猫商城</text><text x="1017" y="88">精准控制</text>
</g>
<path d="M1086 80l4 4-4 4M1090 80l4 4-4 4" fill="none" stroke="#aaa"/>
<path d="M1181 77l7-2 7 2v7c0 4-4 7-7 8-3-1-7-4-7-8z" fill="#4dcb6f"/><text x="1188" y="88" font-size="11" fill="#fff" text-anchor="middle">¥</text>
<path d="M1204 82.500h6l-3 3zM1244 82.500h6l-3 3zM1284 82.500h6l-3 3z" fill="#888"/>
<rect x="1220" y="76" width="12" height="15" rx="1" fill="#42c874"/><text x="1226" y="87" font-size="10" fill="#fff" text-anchor="middle">A</text><path d="M1233 84v7M1229.500 87.500h7" stroke="#42c874" stroke-width="2"/>
<path d="M1263 76l10 11M1275 76l-10 11" stroke="#f26060" stroke-width="2"/><circle cx="1263" cy="90" r="2.500" fill="none" stroke="#f26060" stroke-width="1.500"/><circle cx="1275" cy="90" r="2.500" fill="none" stroke="#f26060" stroke-width="1.500"/>
<circle cx="1310" cy="81" r="4.500" fill="none" stroke="#2f86e6" stroke-width="2.200"/><path d="M1307 85l-5 6" stroke="#2f86e6" stroke-width="2.500"/>
<g fill="none" stroke="#555"><rect x="1337.500" y="76.500" width="6" height="6"/><rect x="1337.500" y="85.500" width="6" height="6"/><rect x="1346.500" y="85.500" width="6" height="6"/><path d="M1349.500 75v7M1346 78.500h7"/></g>
</svg>
</body></html>
